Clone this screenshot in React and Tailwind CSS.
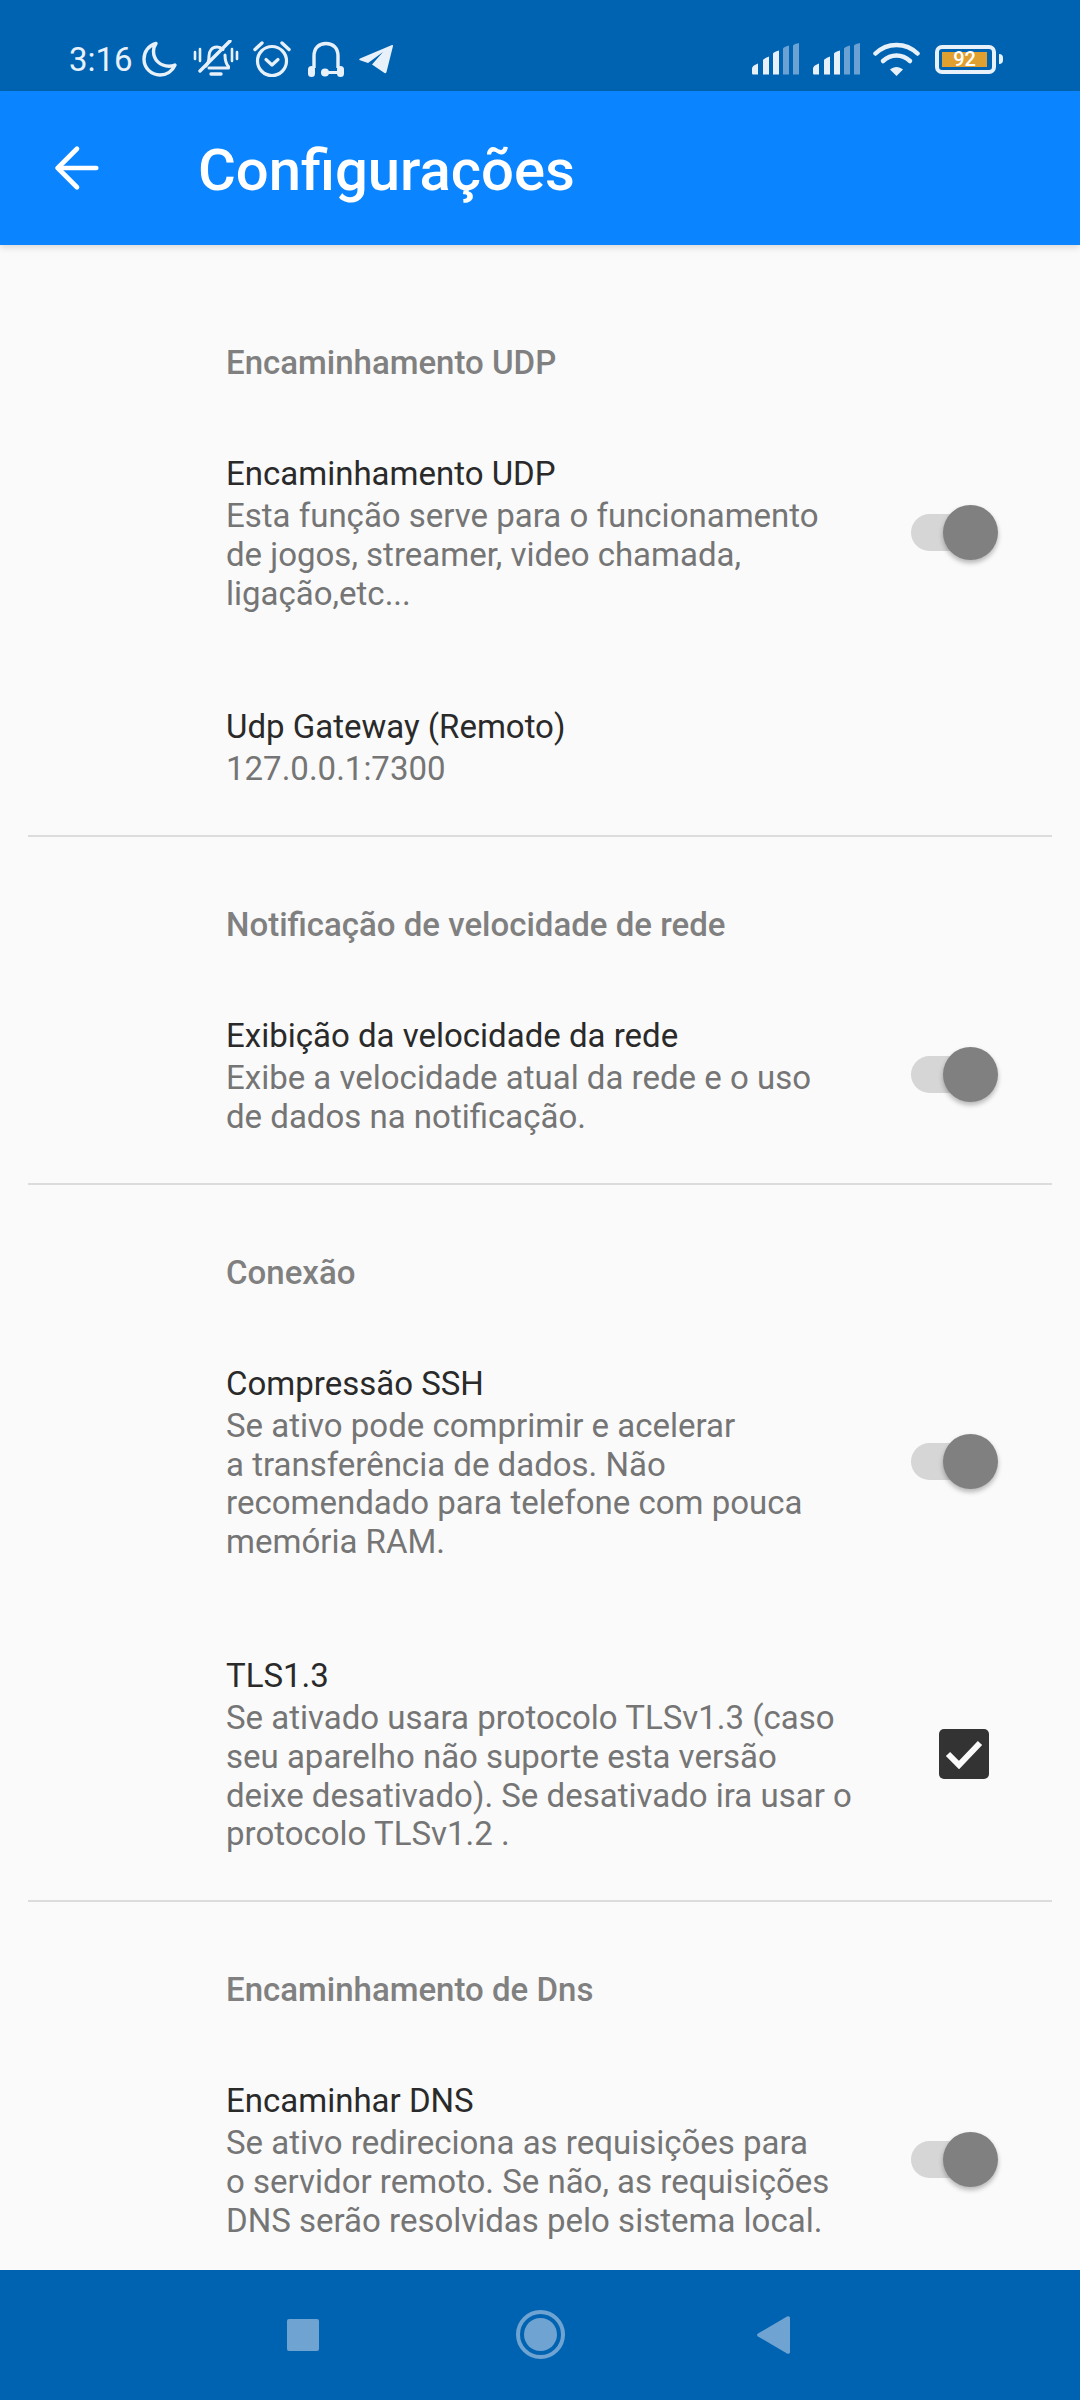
import React from 'react';
import { ArrowLeft } from 'lucide-react';

/* ─── Status bar icons ────────────────────────────────────────────────── */
const Moon = () => (
  <svg width="36" height="36" viewBox="0 0 36 36" fill="none" stroke="#e8f1fa" strokeWidth="3.4" strokeLinejoin="round">
    <path d="M14 2.5C6.5 4.5 2 10.6 2 18c0 9 7.2 16 16 16 6.6 0 12.4-3.9 15-10-2 .9-4 1.2-6 1.2-9 0-15.5-6.5-15.5-15 0-2.9.9-5.4 2.500-7.700Z" />
  </svg>
);

const BellOff = () => (
  <svg width="46" height="38" viewBox="0 0 46 38" fill="none" stroke="#e8f1fa" strokeWidth="3" strokeLinecap="round" strokeLinejoin="round">
    <path d="M2 12v7M7 9v12M39 9v12M44 12v7" strokeWidth="2.6" />
    <path d="M13 26c2-2 3-5 3-10 0-5 3-9 8-9 2.500 0 4.500 1 6 2.500M32 15c0 5 1 9 3.500 11.500V28H16" />
    <path d="M37 1 7 31" strokeWidth="3.4" />
    <path d="M18 34h10" strokeWidth="3.4" />
  </svg>
);

const Alarm = () => (
  <svg width="40" height="38" viewBox="0 0 40 38" fill="none" stroke="#e8f1fa" strokeLinecap="round" strokeLinejoin="round">
    <circle cx="20" cy="21" r="14.500" strokeWidth="3.2" />
    <path d="M14 19.500 20 25l6-5.500" strokeWidth="3.2" />
    <path d="M3 9.500 10 3M37 9.500 30 3" strokeWidth="3.4" />
  </svg>
);

const Headset = () => (
  <svg width="38" height="37" viewBox="0 0 38 37" fill="none">
    <path d="M7 27V15C7 7 12 2.500 19 2.500S31 7 31 15v12" stroke="#e8f1fa" strokeWidth="3.400" />
    <rect x="1" y="25" width="7" height="11" rx="3.500" fill="#e8f1fa" />
    <rect x="30" y="25" width="7" height="11" rx="3.500" fill="#e8f1fa" />
    <path d="M18 31.500h13" stroke="#e8f1fa" strokeWidth="3" />
    <circle cx="18" cy="31.500" r="4" fill="#e8f1fa" />
  </svg>
);

const Telegram = () => (
  <svg width="34" height="30" viewBox="0 0 34 30" fill="#e8f1fa">
    <path d="M33 1 1 14.500c-1 .5-1 1.300 0 1.700l8 2.800L24 8 13 20.500l12.500 8.500c1 .6 1.800.2 2-.9L34 2c.1-.9-.3-1.300-1-1Z" />
  </svg>
);

const Signal = () => (
  <svg width="48" height="32" viewBox="0 0 48 32">
    <path d="M1 26c0-2 1-3.500 6-5.500v11H2.500C1.500 31.500 1 31 1 30Z" fill="#e8f1fa" />
    <path d="M12 17.500c0-1 1-2 6-4v18h-6Z" fill="#e8f1fa" />
    <path d="M22 11c0-1 1-2 6-3.500v24h-6Z" fill="#e8f1fa" />
    <path d="M32 6c0-1 1-2 6-3.500v29h-6Z" fill="#6ba2d3" />
    <path d="M42 3c0-1 1-2 6-3v31.500h-6Z" fill="#6ba2d3" />
  </svg>
);

const Wifi = () => (
  <svg width="47" height="34" viewBox="0 0 47 34" fill="none" stroke="#e8f1fa" strokeWidth="4.500" strokeLinecap="round">
    <path d="M2.500 11.500C14 0 33 0 44.500 11.500" />
    <path d="M10 19c8-7.500 19-7.500 27 0" />
    <path d="M23.500 34 17 27.500c4-3.500 9-3.500 13 0Z" fill="#e8f1fa" stroke="none" />
  </svg>
);

const Battery = () => (
  <div className="flex items-center gap-[3px]">
    <div className="w-[61px] h-[29px] rounded-[7px] border-[4px] border-[#e8f1fa] p-[3px] flex">
      <div className="w-[45px] h-[15px] bg-[#e0a030] flex items-center justify-center text-white text-[20px] font-medium leading-none">92</div>
    </div>
    <div className="w-[4px] h-[10px] rounded-r-full bg-[#e8f1fa]" />
  </div>
);

const StatusBar = () => (
  <div className="h-[91px] shrink-0 bg-[#0063b1] flex items-center justify-between pl-[69px] pr-[77px] pt-[27px] text-[#e8f1fa]">
    <div className="flex items-center">
      <span className="text-[33px] leading-none mr-[9px]">3:16</span>
      <div className="mr-[15px]"><Moon /></div>
      <div className="mr-[13px]"><BellOff /></div>
      <div className="mr-[15px]"><Alarm /></div>
      <div className="mr-[14px]"><Headset /></div>
      <Telegram />
    </div>
    <div className="flex items-center">
      <div className="mr-[13px]"><Signal /></div>
      <div className="mr-[13px]"><Signal /></div>
      <div className="mr-[15px]"><Wifi /></div>
      <Battery />
    </div>
  </div>
);

/* ─── Toolbar ─────────────────────────────────────────────────────────── */
const Toolbar = () => (
  <div className="relative z-10 h-[154px] shrink-0 bg-[#0a84ff] flex items-center shadow-[0_3px_6px_rgba(0,0,0,0.12)]">
    <ArrowLeft className="ml-[44px] mr-[88px] w-[66px] h-[66px] text-white" strokeWidth={1.7} />
    <h1 className="text-[58px] leading-none font-medium text-white pt-[3px]">Configurações</h1>
  </div>
);

/* ─── Preference rows ─────────────────────────────────────────────────── */
const Toggle = () => (
  <div className="relative w-[87px] h-[55px] flex items-center shrink-0">
    <div className="w-[77px] h-[37px] rounded-full bg-[#d6d6d6]" />
    <div className="absolute right-0 top-0 w-[55px] h-[55px] rounded-full bg-[#808080] shadow-[0_3px_5px_rgba(0,0,0,0.28)]" />
  </div>
);

const Checkbox = () => (
  <div className="w-[50px] h-[50px] mr-[9px] rounded-[5px] bg-[#333333] flex items-center justify-center shrink-0">
    <svg width="38" height="30" viewBox="0 0 38 30" fill="none" stroke="#fafafa" strokeWidth="6">
      <path d="M3 15l11 11L35 4" />
    </svg>
  </div>
);

const Row = ({ title, desc, control }) => (
  <div className="flex items-center justify-between pt-[45px] pb-[46px] pl-[226px] pr-[82px]">
    <div>
      <div className="text-[33px] leading-[46px] text-[#2a2a2a]">{title}</div>
      <div className="text-[33px] leading-[38.8px] text-[#757575] whitespace-pre">{desc}</div>
    </div>
    {control}
  </div>
);

const SectionTitle = ({ children, first }) => (
  <div className={`${first ? 'pt-[95px]' : 'pt-[65px]'} pb-[21px] pl-[226px] text-[33px] leading-[45px] font-medium text-[#808080]`}>
    {children}
  </div>
);

const Divider = () => <div className="mx-[28px] h-[2px] bg-[#dcdcdc]" />;

/* ─── Nav bar ─────────────────────────────────────────────────────────── */
const NavBar = () => (
  <div className="h-[130px] shrink-0 bg-[#0063b1] flex items-center pb-[1px] pl-[287px]">
    <div className="w-[32px] h-[32px] rounded-[2px] bg-[#6fa3d1] mr-[197px]" />
    <div className="w-[49px] h-[49px] rounded-full border-[4px] border-[#6fa3d1] flex items-center justify-center mr-[192px]">
      <div className="w-[33px] h-[33px] rounded-full bg-[#6fa3d1]" />
    </div>
    <svg width="33" height="38" viewBox="0 0 33 38" fill="#6fa3d1">
      <path d="M1 17.500 30 .5c1.500-.8 3 0 3 1.500v34c0 1.500-1.500 2.300-3 1.500L1 20.500c-1.300-.8-1.300-2.200 0-3Z" />
    </svg>
  </div>
);

export default function App() {
  return (
    <div className="w-[1080px] h-[2400px] flex flex-col overflow-hidden bg-[#fafafa] font-['Roboto',sans-serif]">
      <StatusBar />
      <Toolbar />
      <div className="flex-1 overflow-hidden">
        <SectionTitle first>Encaminhamento UDP</SectionTitle>
        <Row
          title="Encaminhamento UDP"
          desc={'Esta função serve para o funcionamento\nde jogos, streamer, video chamada,\nligação,etc...'}
          control={<Toggle />}
        />
        <Row title="Udp Gateway (Remoto)" desc="127.0.0.1:7300" />
        <Divider />

        <SectionTitle>Notificação de velocidade de rede</SectionTitle>
        <Row
          title="Exibição da velocidade da rede"
          desc={'Exibe a velocidade atual da rede e o uso\nde dados na notificação.'}
          control={<Toggle />}
        />
        <Divider />

        <SectionTitle>Conexão</SectionTitle>
        <Row
          title="Compressão SSH"
          desc={'Se ativo pode comprimir e acelerar\na transferência de dados. Não\nrecomendado para telefone com pouca\nmemória RAM.'}
          control={<Toggle />}
        />
        <Row
          title="TLS1.3"
          desc={'Se ativado usara protocolo TLSv1.3 (caso\nseu aparelho não suporte esta versão\ndeixe desativado). Se desativado ira usar o\nprotocolo TLSv1.2 .'}
          control={<Checkbox />}
        />
        <Divider />

        <SectionTitle>Encaminhamento de Dns</SectionTitle>
        <Row
          title="Encaminhar DNS"
          desc={'Se ativo redireciona as requisições para\no servidor remoto. Se não, as requisições\nDNS serão resolvidas pelo sistema local.'}
          control={<Toggle />}
        />
      </div>
      <NavBar />
    </div>
  );
}
